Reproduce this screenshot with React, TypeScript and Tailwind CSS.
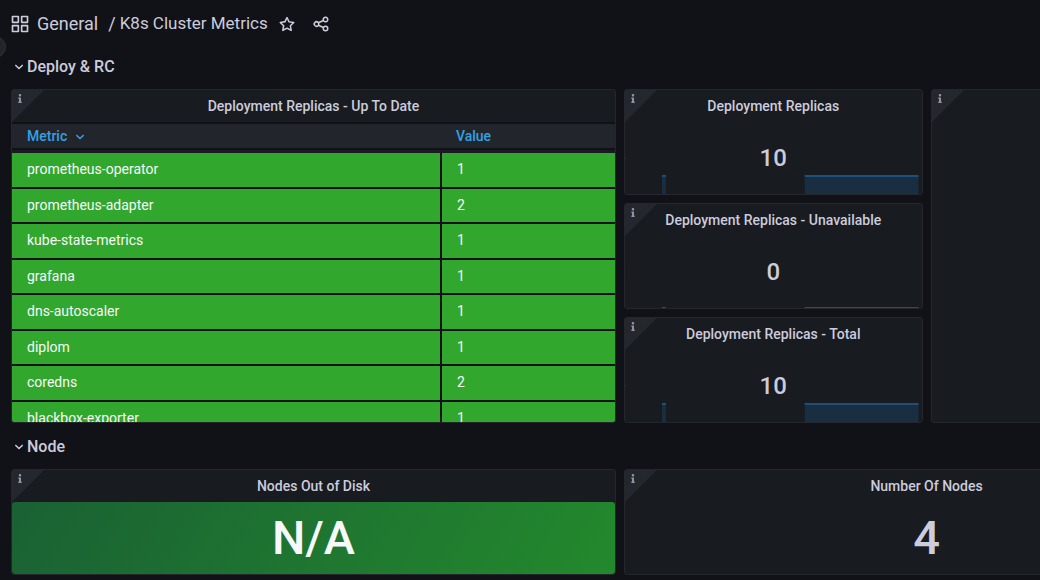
import type { ReactNode } from "react";
import { FaInfo } from "react-icons/fa";

const ICONS = {
  apps: "M10,13H3a1,1,0,0,0-1,1v7a1,1,0,0,0,1,1h7a1,1,0,0,0,1-1V14A1,1,0,0,0,10,13ZM9,20H4V15H9ZM21,2H14a1,1,0,0,0-1,1v7a1,1,0,0,0,1,1h7a1,1,0,0,0,1-1V3A1,1,0,0,0,21,2ZM20,9H15V4h5Zm1,4H14a1,1,0,0,0-1,1v7a1,1,0,0,0,1,1h7a1,1,0,0,0,1-1V14A1,1,0,0,0,21,13Zm-1,7H15V15h5ZM10,2H3A1,1,0,0,0,2,3v7a1,1,0,0,0,1,1h7a1,1,0,0,0,1-1V3A1,1,0,0,0,10,2ZM9,9H4V4H9Z",
  star: "M22,9.67A1,1,0,0,0,21.14,9l-5.69-.83L12.9,3a1,1,0,0,0-1.8,0L8.55,8.16,2.86,9a1,1,0,0,0-.81.68,1,1,0,0,0,.25,1l4.13,4-1,5.68A1,1,0,0,0,6.9,21.44L12,18.77l5.1,2.67a.93.93,0,0,0,.46.12,1,1,0,0,0,.59-.19,1,1,0,0,0,.4-1l-1-5.68,4.13-4A1,1,0,0,0,22,9.67Zm-6.15,4a1,1,0,0,0-.29.88l.72,4.2-3.76-2a1.06,1.06,0,0,0-.94,0l-3.76,2,.72-4.2a1,1,0,0,0-.29-.88l-3-3,4.21-.61a1,1,0,0,0,.76-.55L12,5.7l1.88,3.82a1,1,0,0,0,.76.55l4.21.61Z",
  share:
    "M18,14a4,4,0,0,0-3.08,1.48l-5.1-2.35a3.64,3.64,0,0,0,0-2.26l5.1-2.35A4,4,0,1,0,14,6a4.17,4.17,0,0,0,.07.71L8.79,9.14a4,4,0,1,0,0,5.72l5.28,2.43A4.17,4.17,0,0,0,14,18a4,4,0,1,0,4-4ZM18,4a2,2,0,1,1-2,2A2,2,0,0,1,18,4ZM6,14a2,2,0,1,1,2-2A2,2,0,0,1,6,14Zm12,6a2,2,0,1,1,2-2A2,2,0,0,1,18,20Z",
  down: "M17,9.17a1,1,0,0,0-1.41,0L12,12.71,8.46,9.17a1,1,0,0,0-1.41,0,1,1,0,0,0,0,1.42l4.24,4.24a1,1,0,0,0,1.42,0L17,10.59A1,1,0,0,0,17,9.17Z",
};

function Icon({ name, className }: { name: keyof typeof ICONS; className: string }) {
  return (
    <svg viewBox="0 0 24 24" fill="currentColor" aria-hidden="true" className={className}>
      <path d={ICONS[name]} />
    </svg>
  );
}

const REPLICAS = [
  { metric: "prometheus-operator", value: 1 },
  { metric: "prometheus-adapter", value: 2 },
  { metric: "kube-state-metrics", value: 1 },
  { metric: "grafana", value: 1 },
  { metric: "dns-autoscaler", value: 1 },
  { metric: "diplom", value: 1 },
  { metric: "coredns", value: 2 },
  { metric: "blackbox-exporter", value: 1 },
];

function Panel({ title, className, children }: { title?: string; className: string; children?: ReactNode }) {
  return (
    <section
      className={`relative flex flex-col overflow-hidden rounded-[3px] border border-[#25272c] bg-[#181b1f] ${className}`}
    >
      <svg viewBox="0 0 32 32" aria-hidden="true" className="absolute top-0 left-0 size-8">
        <path d="M0 0H32L0 32Z" fill="#24272d" />
      </svg>
      <button type="button" aria-label="Panel description" className="absolute top-1 left-[5px] text-[#9293a0]">
        <FaInfo className="h-[9px] w-1.5" />
      </button>
      {title && <h2 className="h-8 shrink-0 text-center text-sm/8 font-medium">{title}</h2>}
      {children}
    </section>
  );
}

function Sparkline({ height }: { height: number }) {
  const top = 72 - height;
  return (
    <svg viewBox="0 0 297 72" preserveAspectRatio="none" aria-hidden="true" className="absolute inset-0 size-full">
      <path d="M0 36h1" stroke="#34373d" />
      <path d={`M37 72V${top}h4V72ZM180 72V${top}H294V72Z`} fill="#1a2e42" />
      <path d={`M37 ${top}h4v2h-4ZM180 ${top}H294v2H180Z`} fill="#1d4f7b" />
    </svg>
  );
}

function StatPanel({ title, value, height }: { title: string; value: number; height: number }) {
  return (
    <Panel title={title} className="h-[106px]">
      <div className="relative flex grow items-center justify-center">
        <Sparkline height={height} />
        <span className="relative text-2xl font-medium">{value}</span>
      </div>
    </Panel>
  );
}

function RowTitle({ children }: { children: ReactNode }) {
  return (
    <button type="button" className="flex h-[46px] items-center pt-0.5 text-base font-medium">
      <Icon name="down" className="mr-[-1px] ml-[-1px] size-[18px]" />
      {children}
    </button>
  );
}

function ReplicaTable() {
  return (
    <div className="min-h-0 grow overflow-hidden">
      <table className="h-[315px] w-full table-fixed border-separate border-spacing-0 text-left text-sm">
        <colgroup>
          <col className="w-[430px]" />
          <col />
        </colgroup>
        <thead className="h-[31px] text-[#33a2e5]">
          <tr className="h-[31px]">
            <th className="p-0 pb-[3px] font-medium">
              <button
                type="button"
                className="flex h-7 w-full items-center border-y-2 border-[#111217] bg-[#22252b] pl-[15px]"
              >
                Metric
                <Icon name="down" className="mt-0.5 ml-1 size-[18px]" />
              </button>
            </th>
            <th className="p-0 pb-[3px] font-medium">
              <button
                type="button"
                className="flex h-7 w-full items-center border-y-2 border-[#111217] bg-[#22252b] pl-3.5"
              >
                Value
              </button>
            </th>
          </tr>
        </thead>
        <tbody className="text-[#f7f8fa]">
          {REPLICAS.map((row) => (
            <tr key={row.metric}>
              <td className="border-r-2 border-b-2 border-[#111217] bg-[#32a72e] p-0 pb-px pl-[15px]">{row.metric}</td>
              <td className="border-b-2 border-[#111217] bg-[#32a72e] p-0 pb-px pl-[15px]">{row.value}</td>
            </tr>
          ))}
        </tbody>
      </table>
    </div>
  );
}

export default function App() {
  return (
    <div className="relative min-h-screen overflow-hidden bg-[#111217] pl-[11px] font-['Roboto',sans-serif] text-[#ccccdc]">
      <button
        type="button"
        aria-label="Expand menu"
        className="absolute top-9 left-[-16px] size-[22px] rounded-full border border-[#303238] bg-[#22252b]"
      />
      <header className="flex h-[43px] items-center pt-1 text-lg">
        <Icon name="apps" className="mr-[7px] ml-[-1px] size-5" />
        <nav className="flex items-center" aria-label="Breadcrumb">
          <a href="#general">General</a>
          <span className="mr-1 ml-2.5">/</span>
          <a href="#dashboard" className="text-[17px]">
            K8s Cluster Metrics
          </a>
        </nav>
        <button type="button" aria-label="Mark as favorite" className="ml-2.5">
          <Icon name="star" className="size-[18px]" />
        </button>
        <button type="button" aria-label="Share dashboard" className="ml-4">
          <Icon name="share" className="size-[18px]" />
        </button>
      </header>
      <main className="min-w-[1218px]">
        <RowTitle>Deploy &amp; RC</RowTitle>
        <div className="grid grid-cols-4 grid-rows-3 gap-2">
          <Panel title="Deployment Replicas - Up To Date" className="col-span-2 row-span-3 h-[334px]">
            <ReplicaTable />
          </Panel>
          <StatPanel title="Deployment Replicas" value={10} height={19} />
          <Panel className="col-start-4 row-span-3 row-start-1" />
          <StatPanel title="Deployment Replicas - Unavailable" value={0} height={1} />
          <StatPanel title="Deployment Replicas - Total" value={10} height={19} />
        </div>
        <RowTitle>Node</RowTitle>
        <div className="grid grid-cols-2 gap-2">
          <Panel title="Nodes Out of Disk" className="h-[106px]">
            <div className="flex grow items-center justify-center rounded-[3px] bg-[linear-gradient(120deg,#1a6134,#23892d)] text-[47px] font-medium text-[#f7f8fa]">
              N/A
            </div>
          </Panel>
          <Panel title="Number Of Nodes" className="h-[106px]">
            <div className="flex grow items-center justify-center text-[47px] font-medium">4</div>
          </Panel>
        </div>
      </main>
    </div>
  );
}
